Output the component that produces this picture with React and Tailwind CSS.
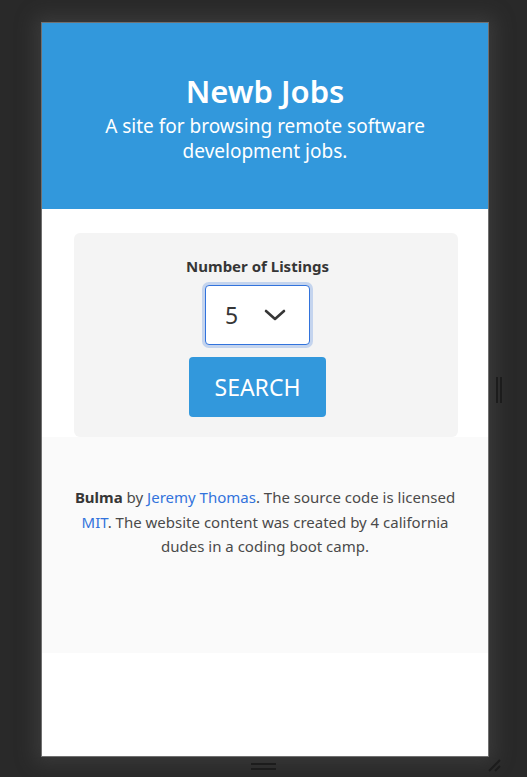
import React from "react";

export default function App() {
  const font = { fontFamily: '"Noto Sans", "Open Sans", sans-serif' };
  return (
    <div className="relative w-[527px] h-[777px] overflow-hidden bg-[#292929]" style={font}>
      <div className="pt-[22px] pl-[41px]">
        <div className="w-[448px] h-[735px] border border-[#707070] bg-white shadow-[0_0_18px_6px_rgba(80,80,80,0.45)] flex flex-col">
          <header className="h-[186px] bg-[#3298dc] flex flex-col items-center text-white text-center pt-[48px]">
            <h1 className="text-[31px] font-semibold leading-[40px]">Newb Jobs</h1>
            <p className="text-[19px] leading-[25px] mt-[3px] px-6">A site for browsing remote software development jobs.</p>
          </header>
          <section className="pt-[24px] pl-[32px] pr-[30px]">
            <div className="bg-[#f4f4f4] rounded-[6px] pt-[22px] pb-[20px] pr-[17px] flex flex-col items-center">
              <label className="text-[15px] font-bold text-[#363636] leading-[22px]">Number of Listings</label>
              <div className="mt-[8px] w-[105px] h-[60px] rounded-[4px] border border-[#3273dc] bg-white shadow-[0_0_0_3px_rgba(50,115,220,0.25)] flex items-center pl-[19px] pr-[23px] justify-between">
                <span className="text-[23px] text-[#363636] leading-none">5</span>
                <svg width="22" height="14" viewBox="0 0 22 14" fill="none">
                  <path d="M2 3 L11 11 L20 3" stroke="#363636" strokeWidth="2.6" strokeLinecap="round" strokeLinejoin="round" />
                </svg>
              </div>
              <button className="mt-[12px] w-[137px] h-[60px] rounded-[4px] bg-[#3298dc] text-white text-[23px] leading-none">SEARCH</button>
            </div>
          </section>
          <footer className="bg-[#fafafa] pt-[48px] pb-[94px] px-[24px] text-center text-[15px] leading-[24.5px] text-[#4a4a4a]">
            <p>
              <strong className="text-[#363636] font-bold">Bulma</strong> by <a className="text-[#3273dc]">Jeremy Thomas</a>. The source code is licensed <a className="text-[#3273dc]">MIT</a>. The website content was created by 4 california dudes in a coding boot camp.
            </p>
          </footer>
        </div>
      </div>
      {/* right resize handle */}
      <div className="absolute left-[496px] top-[377px] flex gap-[2px]">
        <div className="w-[2px] h-[26px] bg-[#1c1c1c]" />
        <div className="w-[2px] h-[26px] bg-[#1c1c1c]" />
      </div>
      {/* bottom resize handle */}
      <div className="absolute left-[251px] top-[763px] flex flex-col gap-[3px]">
        <div className="w-[25px] h-[2px] bg-[#1c1c1c]" />
        <div className="w-[25px] h-[2px] bg-[#1c1c1c]" />
      </div>
      {/* corner resize */}
      <svg className="absolute left-[488px] top-[758px]" width="14" height="14" viewBox="0 0 14 14">
        <path d="M1 13 L12 2" stroke="#1c1c1c" strokeWidth="2" />
        <path d="M7 13 L12 8" stroke="#1c1c1c" strokeWidth="2" />
      </svg>
    </div>
  );
}
